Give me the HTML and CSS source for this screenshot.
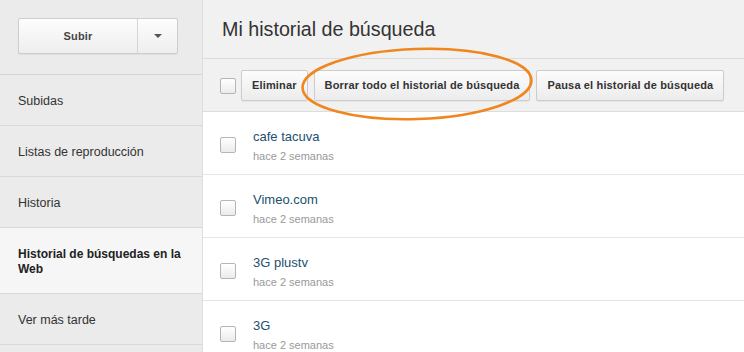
FILE: index.html
```html
<!DOCTYPE html>
<html lang="es">

<head>
    <meta charset="UTF-8">
    <title>Mi historial de búsqueda</title>
    <link rel="stylesheet" href="styles.css">
</head>

<body>
    <div class="page">
        <aside class="sidebar">
            <div class="upload-area">
                <div class="upload-btn">
                    <span class="upload-main">Subir</span>
                    <span class="upload-arrow"><span class="caret"></span></span>
                </div>
            </div>
            <ul class="nav">
                <li>Subidas</li>
                <li>Listas de reproducción</li>
                <li>Historia</li>
                <li class="active">Historial de búsquedas en la Web</li>
                <li>Ver más tarde</li>
            </ul>
        </aside>

        <main class="content">
            <div class="content-header">
                <h1>Mi historial de búsqueda</h1>
            </div>

            <div class="toolbar">
                <span class="check"></span>
                <button>Eliminar</button>
                <button>Borrar todo el historial de búsqueda</button>
                <button>Pausa el historial de búsqueda</button>
            </div>

            <!-- highlight drawn over the toolbar -->
            <svg class="highlight" width="245" height="86" viewBox="0 0 245 86">
                <ellipse cx="122" cy="42" rx="114.5" ry="35" fill="none" stroke="#f0861f" stroke-width="2.6"
                    transform="rotate(-2 122 42)" />
            </svg>

            <ul class="history">
                <li class="item">
                    <span class="check"></span>
                    <div class="item-text">
                        <a href="#">cafe tacuva</a>
                        <span class="when">hace 2 semanas</span>
                    </div>
                </li>
                <li class="item">
                    <span class="check"></span>
                    <div class="item-text">
                        <a href="#">Vimeo.com</a>
                        <span class="when">hace 2 semanas</span>
                    </div>
                </li>
                <li class="item">
                    <span class="check"></span>
                    <div class="item-text">
                        <a href="#">3G plustv</a>
                        <span class="when">hace 2 semanas</span>
                    </div>
                </li>
                <li class="item">
                    <span class="check"></span>
                    <div class="item-text">
                        <a href="#">3G</a>
                        <span class="when">hace 2 semanas</span>
                    </div>
                </li>
            </ul>
        </main>
    </div>
</body>

</html>
```

FILE: styles.css
```css
* {
    box-sizing: border-box;
    margin: 0;
    padding: 0;
    font-family: "Liberation Sans", Arial, sans-serif;
}

body {
    width: 744px;
    height: 352px;
    overflow: hidden;
    background-color: #ffffff;
    color: #333333;
}

.page {
    display: flex;
    height: 352px;
}

/* Sidebar */
.sidebar {
    width: 203px;
    flex-shrink: 0;
    background-color: #ebebeb;
    border-right: 1px solid #dedede;
}

.upload-area {
    height: 75px;
    padding: 18px 0 0 18px;
    border-bottom: 1px solid #d6d6d6;
}

.upload-btn {
    display: flex;
    width: 160px;
    height: 36px;
    border: 1px solid #cdcdcd;
    border-radius: 2px;
    background: linear-gradient(#fdfdfd, #eeeeee);
    box-shadow: 0 1px 1px rgba(0, 0, 0, 0.06);
}

.upload-main {
    flex: 1;
    display: flex;
    align-items: center;
    justify-content: center;
    font-size: 11px;
    font-weight: bold;
    letter-spacing: 0.2px;
    color: #444444;
    border-right: 1px solid #d6d6d6;
}

.upload-arrow {
    width: 39px;
    display: flex;
    align-items: center;
    justify-content: center;
}

.caret {
    width: 0;
    height: 0;
    border-left: 4px solid transparent;
    border-right: 4px solid transparent;
    border-top: 4px solid #555555;
}

.nav {
    list-style: none;
}

.nav li {
    padding: 19px 18px 16px;
    font-size: 12.5px;
    line-height: 15px;
    color: #333333;
    border-bottom: 1px solid #d9d9d9;
}

.nav li.active {
    background-color: #f6f6f6;
    font-size: 12px;
    font-weight: bold;
    color: #222222;
    padding-right: 12px;
}

/* Main content */
.content {
    flex: 1;
    position: relative;
}

.content-header {
    height: 59px;
    padding: 18px 0 0 19px;
    background-color: #f1f1f1;
    border-bottom: 1px solid #dddddd;
}

.content-header h1 {
    font-size: 19.7px;
    font-weight: normal;
    color: #333333;
    line-height: 22px;
}

.toolbar {
    display: flex;
    align-items: center;
    gap: 6px;
    height: 53px;
    padding-left: 17px;
    background-color: #f1f1f1;
    border-bottom: 1px solid #dddddd;
}

.toolbar .check {
    margin-right: -1px;
    margin-top: 1px;
}

.toolbar button {
    height: 31px;
    padding: 0 10px;
    font-size: 11px;
    font-weight: bold;
    letter-spacing: 0.15px;
    color: #333333;
    border: 1px solid #cccccc;
    border-radius: 2px;
    background: linear-gradient(#fcfcfc, #ececec);
    box-shadow: 0 1px 1px rgba(0, 0, 0, 0.05);
    cursor: pointer;
}

.check {
    display: inline-block;
    width: 16px;
    height: 16px;
    flex-shrink: 0;
    border: 1px solid #b5b5b5;
    border-radius: 2px;
    background: linear-gradient(#ffffff, #ebebeb);
}

.highlight {
    position: absolute;
    left: 92px;
    top: 42px;
}

/* History list */
.history {
    list-style: none;
}

.history .item {
    display: flex;
    height: 63px;
    padding: 16px 0 0 17px;
    border-bottom: 1px solid #e5e5e5;
}

.history .item .check {
    margin-top: 9px;
    margin-right: 17px;
}

.item-text {
    display: flex;
    flex-direction: column;
}

.item-text a {
    font-size: 13px;
    line-height: 17px;
    color: #21506f;
    text-decoration: none;
}

.item-text .when {
    margin-top: 4px;
    font-size: 11px;
    line-height: 14px;
    color: #999999;
}
```
